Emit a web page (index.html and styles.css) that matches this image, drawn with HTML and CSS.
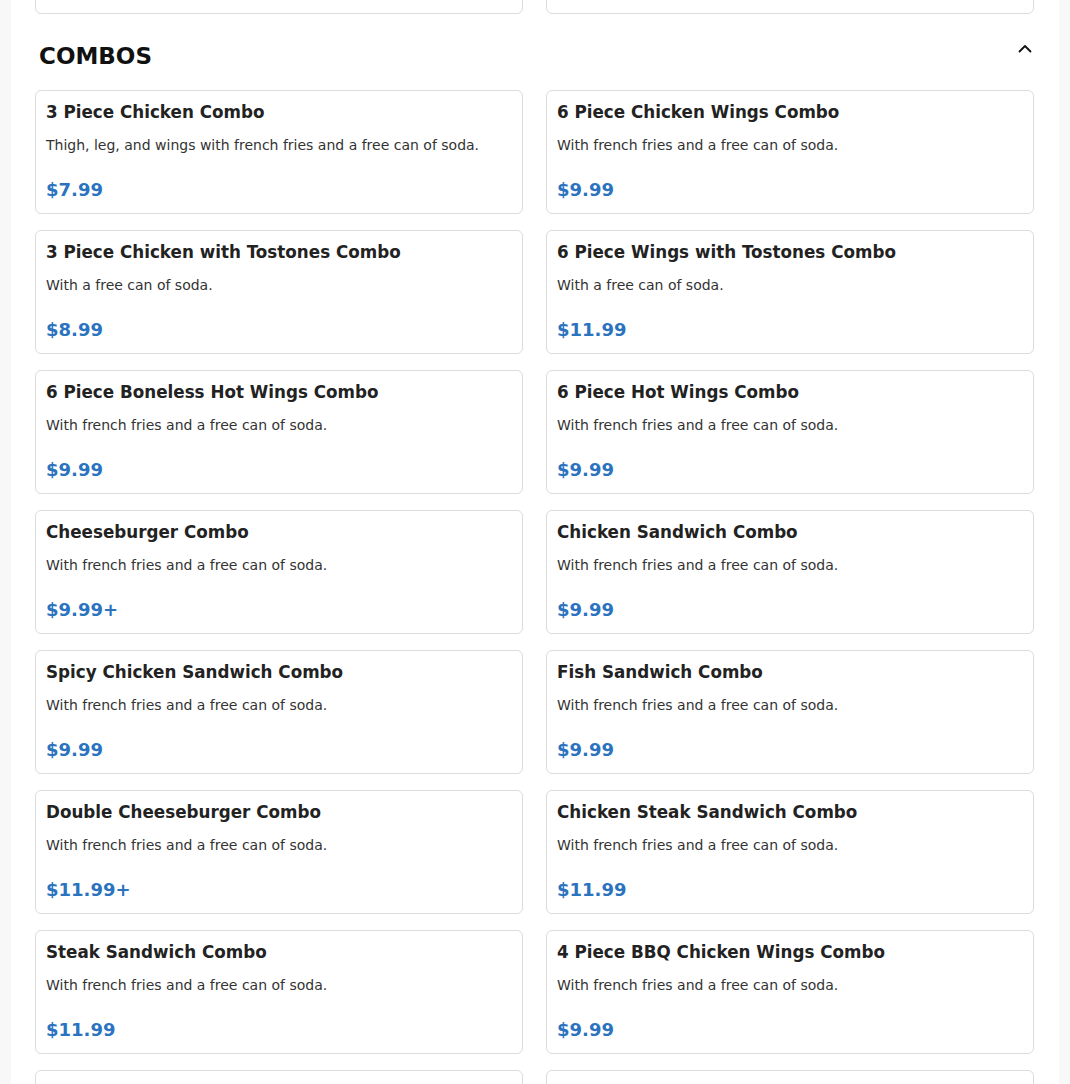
FILE: index.html
```html
<!DOCTYPE html>
<html lang="en">
<head>
<meta charset="utf-8">
<title>Menu - Combos</title>
<link rel="stylesheet" href="styles.css">
</head>
<body>
<main class="menu">
  <section class="section section-prev">
    <div class="grid">
      <div class="card">
        <h3 class="card-title">Tostones</h3>
        <p class="card-desc">Fried green plantains.</p>
        <div class="card-price">$3.99</div>
      </div>
      <div class="card">
        <h3 class="card-title">Can of Soda</h3>
        <p class="card-desc">Assorted flavors.</p>
        <div class="card-price">$1.25</div>
      </div>
    </div>
  </section>

  <section class="section">
    <div class="section-header">
      <h2 class="section-title">COMBOS</h2>
      <svg class="chevron" width="14" height="11" viewBox="0 0 14 11" aria-hidden="true">
        <polyline points="1.5,8.5 7,3 12.5,8.5" fill="none" stroke="#111" stroke-width="1.8" stroke-linecap="round" stroke-linejoin="round"/>
      </svg>
    </div>
    <div class="grid">
      <div class="card">
        <h3 class="card-title">3 Piece Chicken Combo</h3>
        <p class="card-desc">Thigh, leg, and wings with french fries and a free can of soda.</p>
        <div class="card-price">$7.99</div>
      </div>
      <div class="card">
        <h3 class="card-title">6 Piece Chicken Wings Combo</h3>
        <p class="card-desc">With french fries and a free can of soda.</p>
        <div class="card-price">$9.99</div>
      </div>
      <div class="card">
        <h3 class="card-title">3 Piece Chicken with Tostones Combo</h3>
        <p class="card-desc">With a free can of soda.</p>
        <div class="card-price">$8.99</div>
      </div>
      <div class="card">
        <h3 class="card-title">6 Piece Wings with Tostones Combo</h3>
        <p class="card-desc">With a free can of soda.</p>
        <div class="card-price">$11.99</div>
      </div>
      <div class="card">
        <h3 class="card-title">6 Piece Boneless Hot Wings Combo</h3>
        <p class="card-desc">With french fries and a free can of soda.</p>
        <div class="card-price">$9.99</div>
      </div>
      <div class="card">
        <h3 class="card-title">6 Piece Hot Wings Combo</h3>
        <p class="card-desc">With french fries and a free can of soda.</p>
        <div class="card-price">$9.99</div>
      </div>
      <div class="card">
        <h3 class="card-title">Cheeseburger Combo</h3>
        <p class="card-desc">With french fries and a free can of soda.</p>
        <div class="card-price">$9.99+</div>
      </div>
      <div class="card">
        <h3 class="card-title">Chicken Sandwich Combo</h3>
        <p class="card-desc">With french fries and a free can of soda.</p>
        <div class="card-price">$9.99</div>
      </div>
      <div class="card">
        <h3 class="card-title">Spicy Chicken Sandwich Combo</h3>
        <p class="card-desc">With french fries and a free can of soda.</p>
        <div class="card-price">$9.99</div>
      </div>
      <div class="card">
        <h3 class="card-title">Fish Sandwich Combo</h3>
        <p class="card-desc">With french fries and a free can of soda.</p>
        <div class="card-price">$9.99</div>
      </div>
      <div class="card">
        <h3 class="card-title">Double Cheeseburger Combo</h3>
        <p class="card-desc">With french fries and a free can of soda.</p>
        <div class="card-price">$11.99+</div>
      </div>
      <div class="card">
        <h3 class="card-title">Chicken Steak Sandwich Combo</h3>
        <p class="card-desc">With french fries and a free can of soda.</p>
        <div class="card-price">$11.99</div>
      </div>
      <div class="card">
        <h3 class="card-title">Steak Sandwich Combo</h3>
        <p class="card-desc">With french fries and a free can of soda.</p>
        <div class="card-price">$11.99</div>
      </div>
      <div class="card">
        <h3 class="card-title">4 Piece BBQ Chicken Wings Combo</h3>
        <p class="card-desc">With french fries and a free can of soda.</p>
        <div class="card-price">$9.99</div>
      </div>
      <div class="card">
        <h3 class="card-title">Fried Fish Combo</h3>
        <p class="card-desc">With french fries and a free can of soda.</p>
        <div class="card-price">$10.99</div>
      </div>
      <div class="card">
        <h3 class="card-title">4 Piece Hot Wings Combo</h3>
        <p class="card-desc">With french fries and a free can of soda.</p>
        <div class="card-price">$8.99</div>
      </div>
    </div>
  </section>
</main>
</body>
</html>
```

FILE: styles.css
```css
html, body {
  margin: 0;
  padding: 0;
}

body {
  background: #f8f8f8;
  font-family: "DejaVu Sans", Verdana, sans-serif;
  color: #222;
}

.menu {
  width: 1048px;
  margin: -110px auto 0;
  padding: 0 25px 40px 24px;
  box-sizing: border-box;
  background: #fff;
}

.section-header {
  display: flex;
  justify-content: space-between;
  align-items: flex-start;
  margin-top: 28px;
  padding: 0 2px 0 4px;
}

.section-title {
  margin: 0;
  font-size: 23px;
  line-height: 28px;
  font-weight: 700;
  color: #111;
}

.chevron {
  display: block;
  margin-top: 1px;
}

.grid {
  display: grid;
  grid-template-columns: 1fr 1fr;
  gap: 16px 23px;
}

.section-header + .grid {
  margin-top: 20px;
}

.card {
  border: 1px solid #dcdcdc;
  border-radius: 6px;
  padding: 11px 10px 10px;
  background: #fff;
}

.card-title {
  margin: 0;
  font-size: 16.75px;
  line-height: 20px;
  font-weight: 700;
  color: #222;
}

.card-desc {
  margin: 13px 0 0;
  font-size: 14px;
  line-height: 20px;
  color: #333;
}

.card-price {
  margin-top: 22px;
  font-size: 18px;
  line-height: 26px;
  font-weight: 700;
  color: #2b73bf;
}
```
